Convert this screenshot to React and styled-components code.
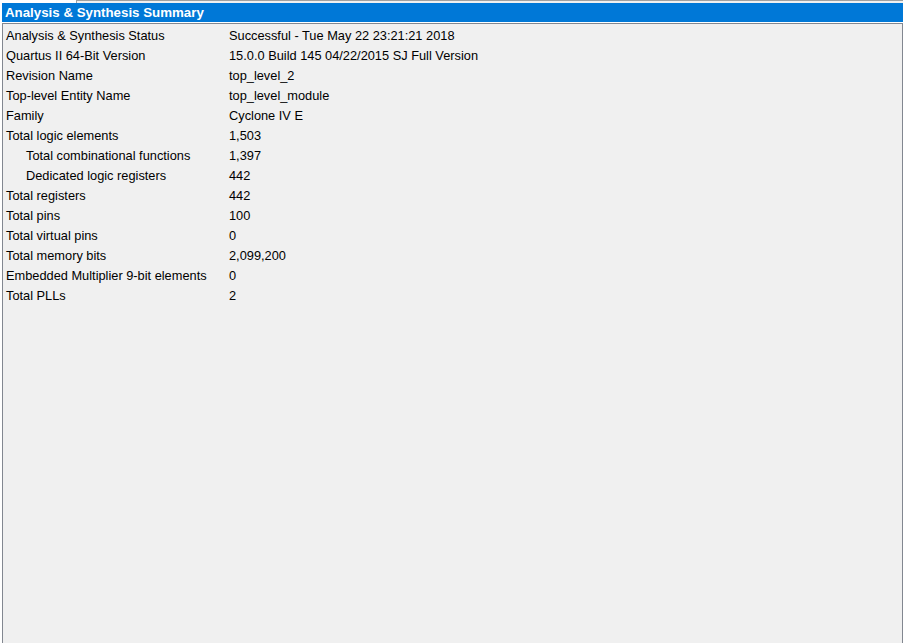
import React from 'react'
import styled, { createGlobalStyle } from 'styled-components'

const GlobalStyle = createGlobalStyle`
  html, body {
    margin: 0;
    padding: 0;
    background: #ffffff;
    font-family: "Liberation Sans", Arial, sans-serif;
  }
`;

const Page = styled.div`
  width: 903px;
  height: 643px;
  display: flex;
  flex-direction: column;
  background: #ffffff;
  overflow: hidden;
`;

const TopStrip = styled.div`
  height: 3px;
  display: flex;
`;

const TopTab = styled.div`
  width: 76px;
  border-right: 1px solid #a0a0a0;
  background: #ffffff;
`;

const TopRest = styled.div`
  flex: 1;
  border-top: 1px solid #a0a0a0;
  background: #f0f0f0;
`;

const Header = styled.div`
  height: 19px;
  margin-left: 2px;
  background: #0078d7;
  color: #ffffff;
  font-weight: bold;
  font-size: 13.3px;
  line-height: 19px;
  padding-left: 3px;
  border-bottom: 1px solid #ffffff;
`;

const Panel = styled.div`
  flex: 1;
  margin-left: 2px;
  border: 1px solid #828790;
  border-bottom: none;
  background: #f0f0f0;
  padding-top: 2px;
`;

const Row = styled.div`
  display: grid;
  grid-template-columns: 226px 1fr;
  height: 20px;
  line-height: 20px;
  font-size: 12.8px;
  color: #000000;
`;

const Label = styled.div`
  padding-left: ${p => (p.$indent ? 23 : 3)}px;
  white-space: nowrap;
`;

const Value = styled.div`
  white-space: nowrap;
`;

const rows = [
  ['Analysis & Synthesis Status', 'Successful - Tue May 22 23:21:21 2018'],
  ['Quartus II 64-Bit Version', '15.0.0 Build 145 04/22/2015 SJ Full Version'],
  ['Revision Name', 'top_level_2'],
  ['Top-level Entity Name', 'top_level_module'],
  ['Family', 'Cyclone IV E'],
  ['Total logic elements', '1,503'],
  ['Total combinational functions', '1,397', true],
  ['Dedicated logic registers', '442', true],
  ['Total registers', '442'],
  ['Total pins', '100'],
  ['Total virtual pins', '0'],
  ['Total memory bits', '2,099,200'],
  ['Embedded Multiplier 9-bit elements', '0'],
  ['Total PLLs', '2'],
];

export default function App() {
  return (
    <Page>
      <GlobalStyle />
      <TopStrip>
        <TopTab />
        <TopRest />
      </TopStrip>
      <Header>Analysis &amp; Synthesis Summary</Header>
      <Panel>
        {rows.map(([label, value, indent]) => (
          <Row key={label}>
            <Label $indent={indent}>{label}</Label>
            <Value>{value}</Value>
          </Row>
        ))}
      </Panel>
    </Page>
  )
}
